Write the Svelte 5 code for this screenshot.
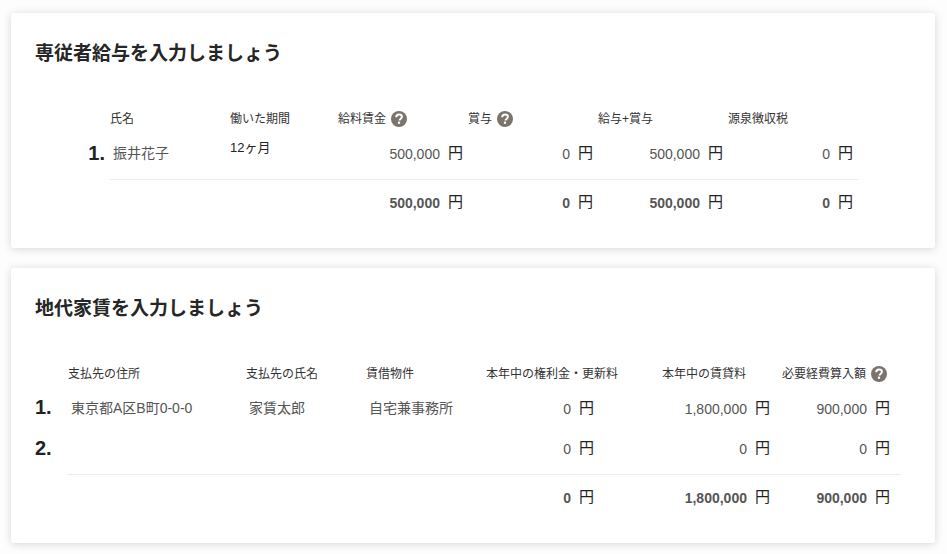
<script>
  const row1 = ['500,000', '0', '500,000', '0'];
  const total1 = ['500,000', '0', '500,000', '0'];
  const rows2 = [
    { no: '1.', addr: '東京都A区B町0-0-0', name: '家賃太郎', prop: '自宅兼事務所', vals: ['0', '1,800,000', '900,000'] },
    { no: '2.', addr: '', name: '', prop: '', vals: ['0', '0', '0'] }
  ];
  const total2 = ['0', '1,800,000', '900,000'];
</script>

{#snippet help()}
  <svg class="help" viewBox="0 0 16 16" aria-hidden="true">
    <circle cx="8" cy="8" r="8" fill="#7a746c" />
    <path d="M5.2 6.3c0-1.7 1.2-2.8 2.9-2.8s2.8 1 2.8 2.3c0 1.2-.7 1.7-1.4 2.2-.6.4-.9.7-.9 1.5" fill="none" stroke="#fff" stroke-width="2" />
    <rect x="6.9" y="10.6" width="2.2" height="2.2" fill="#fff" />
  </svg>
{/snippet}

{#snippet amount(v, bold)}
  <div class="amount" class:bold>
    <span class="num">{v}</span><span class="yen">円</span>
  </div>
{/snippet}

<main class="page">
  <section class="card first">
    <h2>専従者給与を入力しましょう</h2>
    <div class="grid g1">
      <div class="head"></div>
      <div class="head">氏名</div>
      <div class="head">働いた期間</div>
      <div class="head">給料賃金{@render help()}</div>
      <div class="head">賞与{@render help()}</div>
      <div class="head">給与+賞与</div>
      <div class="head">源泉徴収税</div>

      <div class="no">1.</div>
      <div class="text name">振井花子</div>
      <div class="period">12ヶ月</div>
      {#each row1 as v}{@render amount(v, false)}{/each}

      <div class="rule"></div>

      <div></div><div></div><div></div>
      {#each total1 as v}{@render amount(v, true)}{/each}
    </div>
  </section>

  <section class="card second">
    <h2>地代家賃を入力しましょう</h2>
    <div class="grid g2">
      <div class="head"></div>
      <div class="head">支払先の住所</div>
      <div class="head">支払先の氏名</div>
      <div class="head">賃借物件</div>
      <div class="head nowrap">本年中の権利金・更新料</div>
      <div class="head h5">本年中の賃貸料</div>
      <div class="head h6">必要経費算入額{@render help()}</div>

      {#each rows2 as r}
        <div class="no">{r.no}</div>
        <div class="text addr">{r.addr}</div>
        <div class="text addr">{r.name}</div>
        <div class="text addr">{r.prop}</div>
        {#each r.vals as v, i}
          <div class="cell c{i}">{@render amount(v, false)}</div>
        {/each}
      {/each}

      <div class="rule"></div>

      <div></div><div></div><div></div><div></div>
      {#each total2 as v, i}
        <div class="cell c{i}">{@render amount(v, true)}</div>
      {/each}
    </div>
  </section>
</main>

<style>
  :global(body) {
    margin: 0;
    background: #fdfdfd;
    font-family: "Liberation Sans", "Noto Sans CJK JP", sans-serif;
    color: #222;
  }
  .page {
    display: flex;
    flex-direction: column;
    gap: 20px;
    padding: 13px 12px 11px 11px;
    height: 554px;
    box-sizing: border-box;
    overflow: hidden;
  }
  .card {
    background: #fff;
    border-radius: 3px;
    box-shadow: 0 1px 8px rgba(0, 0, 0, 0.16);
    padding: 0 24px;
    box-sizing: border-box;
  }
  .first { height: 235px; }
  .second { height: 275px; }
  h2 {
    margin: 0;
    font-size: 19px;
    line-height: 28px;
    font-weight: 700;
    color: #262626;
    padding-top: 27px;
  }
  .grid {
    display: grid;
    align-items: center;
  }
  .g1 {
    margin-top: 40px;
    grid-template-columns: 75px 120px 108px 130px 130px 130px 130px;
    grid-template-rows: 22px 49px 1px 48px;
    width: 823px;
  }
  .g1 .amount { margin-bottom: 4px; }
  .g1 .no { margin-bottom: 2px; }
  .g1 .name { margin-bottom: 6px; }
  .g2 {
    margin-top: 40px;
    grid-template-columns: 33px 178px 120px 120px 113px 176px 126px;
    grid-template-rows: 24px 41px 40px 7px 44px;
    width: 866px;
  }
  .g2 .head { align-self: start; }
  .g2 .rule { align-self: end; margin-left: -1px; }
  .g2 .addr { margin-bottom: 2px; }
  .head {
    font-size: 12px;
    color: #333;
    line-height: 22px;
    display: flex;
    align-items: center;
    white-space: nowrap;
  }
  .h5 { justify-content: flex-end; padding-right: 29px; }
  .h6 { padding-left: 7px; }
  .help {
    width: 16px;
    height: 16px;
    margin-left: 5px;
    flex: none;
  }
  .no {
    font-size: 20px;
    font-weight: 700;
    color: #222;
    text-align: right;
    padding-right: 5px;
  }
  .g2 .no { text-align: left; padding: 0; }
  .text {
    font-size: 14px;
    color: #555;
  }
  .name { padding-left: 3px; }
  .addr { padding-left: 3px; white-space: nowrap; }
  .period {
    font-size: 13px;
    color: #222;
    align-self: start;
    padding-top: 7px;
  }
  .rule {
    grid-column: 2 / -1;
    height: 1px;
    background: #ececec;
  }
  .amount {
    display: flex;
    justify-content: flex-end;
    align-items: center;
    padding-right: 5px;
  }
  .num {
    font-size: 14px;
    color: #555;
    position: relative;
    top: 1px;
  }
  .bold .num { font-weight: 700; }
  .yen {
    font-size: 15px;
    color: #222;
    margin-left: 8px;
    line-height: 20px;
  }
  .c2 .amount { padding-right: 11px; }
</style>
